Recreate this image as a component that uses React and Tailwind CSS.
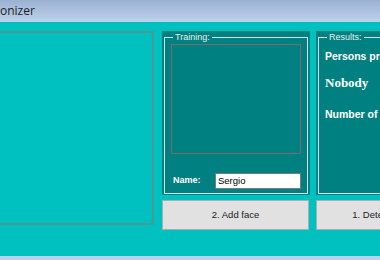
import React from 'react';

// WinForms-style face recognizer window, cropped to the visible part
const GroupBox = ({ title, className, children }) => (
  <div className={`bg-[#008080] px-[2px] pb-[1px] ${className}`}>
    <fieldset className="h-full border border-[#cfe1e1] px-[6px]">
      <legend className="ml-[2px] px-[2px] text-[9px] leading-[12px] text-[#e6f2f2]">{title}</legend>
      {children}
    </fieldset>
  </div>
);

const WinButton = ({ label, className }) => (
  <button className={`h-[30px] border border-[#adadad] bg-[#e1e1e1] text-[9.5px] text-[#1b1b1b] whitespace-nowrap ${className}`}>
    {label}
  </button>
);

const App = () => {
  return (
    <div className="w-[380px] h-[260px] overflow-hidden flex flex-col font-['Liberation_Sans',Arial,sans-serif] select-none">
      {/* title bar */}
      <div className="h-[22px] shrink-0 bg-gradient-to-b from-[#9cb2d2] to-[#bcd1ea] flex items-center">
        <span className="text-[12px] text-[#1e1e1e] font-['Open_Sans',sans-serif] leading-none pb-[1px]">onizer</span>
      </div>

      {/* client area */}
      <div className="flex-1 bg-[#00c0c0] pt-[9px] flex gap-[8px] overflow-hidden">
        {/* capture panel */}
        <div className="w-[154px] h-[194px] shrink-0 border-y-2 border-r-2 border-[#4a9999]" />

        {/* training column */}
        <div className="w-[148px] shrink-0 flex flex-col gap-[5px]">
          <GroupBox title="Training:" className="h-[164px]">
            <div className="mt-[1px] h-[110px] border border-[#7e6a6a]" />
            <div className="mt-[19px] flex items-center">
              <span className="w-[44px] pl-[2px] text-[9px] font-bold text-white">Name:</span>
              <div className="flex-1 h-[16px] border border-[#7a7a7a] bg-white flex items-center px-[2px] text-[9.5px] text-black">
                Sergio
              </div>
            </div>
          </GroupBox>
          <WinButton label="2. Add face" className="w-[147px]" />
        </div>

        {/* results column */}
        <div className="w-[148px] shrink-0 flex flex-col gap-[5px] -ml-[2px]">
          <GroupBox title="Results:" className="h-[164px]">
            <div className="pt-[6px] text-white whitespace-nowrap">
              <div className="text-[10.5px] font-bold">Persons present</div>
              <div className="mt-[8px] text-[13px] font-bold font-['Liberation_Serif',serif]">Nobody</div>
              <div className="mt-[15px] text-[10.5px] font-bold">Number of faces</div>
            </div>
          </GroupBox>
          <WinButton label="1. Detect faces" className="w-[136px]" />
        </div>
      </div>

      {/* bottom strip */}
      <div className="h-[4px] shrink-0 bg-[#b9d1ea]" />
    </div>
  );
};

export default App;
